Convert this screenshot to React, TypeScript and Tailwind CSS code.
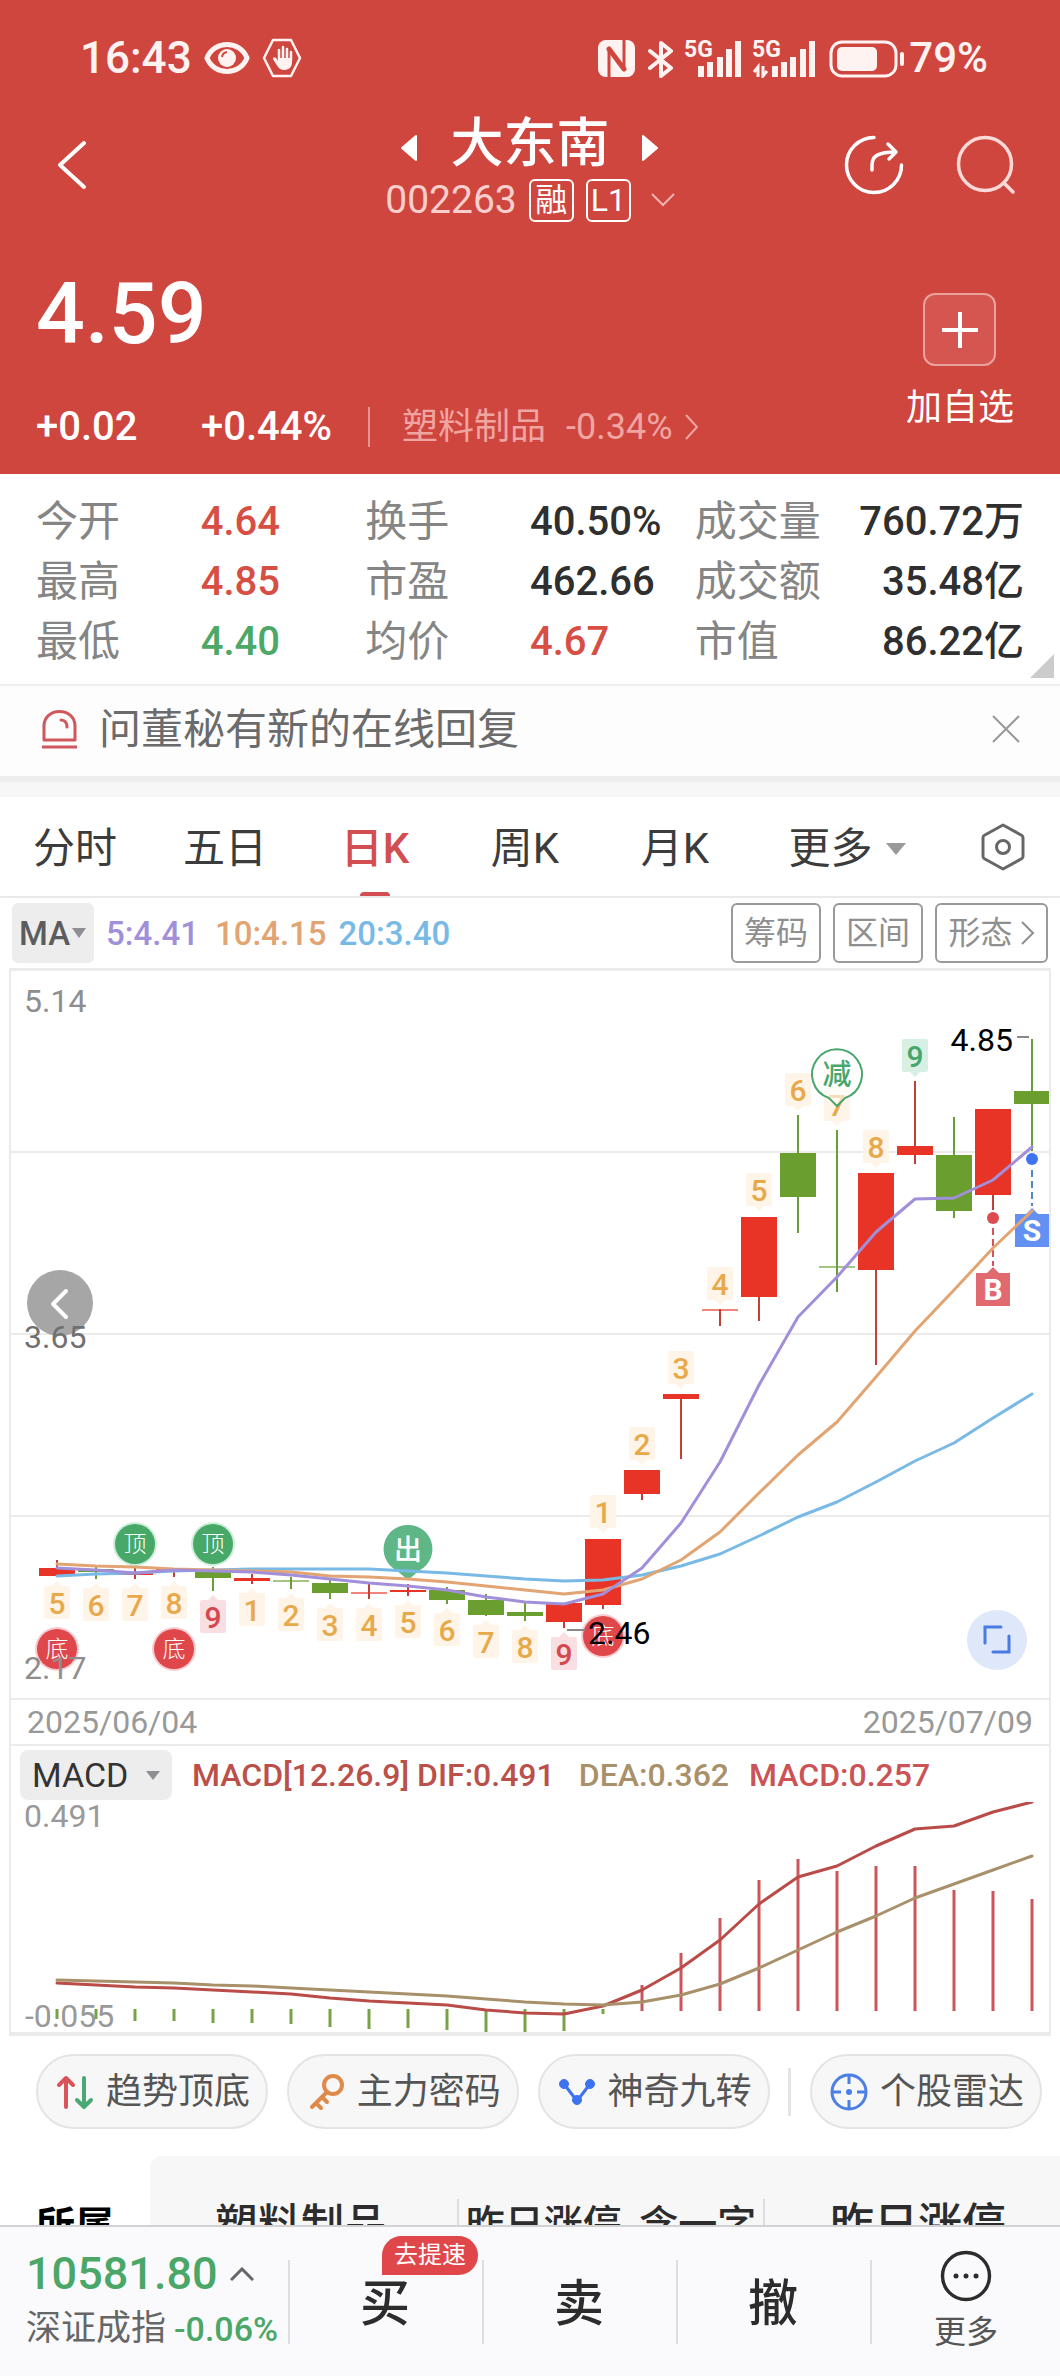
import React from 'react';

type Candle = {
  color: 'r' | 'g';
  open: number;
  close: number;
  high: number;
  low: number;
  thin?: boolean;
};

type Turn = { i: number; n: number; y: number; tone: 'gold' | 'red' | 'green' };

// Everything below is in chart pixels, y measured from the top of each pane
const STEP = 39;
const X0 = 57;
const cx = (i: number) => X0 + STEP * i;

const candles: Candle[] = [
  { color: 'r', open: 598, close: 606, high: 590, low: 606 },
  { color: 'g', open: 599, close: 602, high: 597, low: 609 },
  { color: 'r', open: 603, close: 605, high: 598, low: 609 },
  { color: 'r', open: 599, close: 601, high: 599, low: 607 },
  { color: 'g', open: 602, close: 608, high: 597, low: 621 },
  { color: 'r', open: 608, close: 611, high: 604, low: 614 },
  { color: 'g', open: 610, close: 612, high: 607, low: 619, thin: true },
  { color: 'g', open: 613, close: 623, high: 609, low: 629 },
  { color: 'r', open: 622, close: 624, high: 614, low: 629, thin: true },
  { color: 'r', open: 620, close: 622, high: 614, low: 626 },
  { color: 'g', open: 620, close: 630, high: 617, low: 634 },
  { color: 'g', open: 630, close: 645, high: 624, low: 646 },
  { color: 'g', open: 642, close: 646, high: 633, low: 651 },
  { color: 'r', open: 633, close: 652, high: 633, low: 658 },
  { color: 'r', open: 569, close: 635, high: 569, low: 639 },
  { color: 'r', open: 500, close: 524, high: 500, low: 530 },
  { color: 'r', open: 424, close: 429, high: 424, low: 489 },
  { color: 'r', open: 339, close: 341, high: 339, low: 356, thin: true },
  { color: 'r', open: 247, close: 327, high: 247, low: 351 },
  { color: 'g', open: 183, close: 227, high: 145, low: 263 },
  { color: 'g', open: 296, close: 298, high: 160, low: 322, thin: true },
  { color: 'r', open: 203, close: 300, high: 203, low: 395 },
  { color: 'r', open: 176, close: 185, high: 111, low: 194 },
  { color: 'g', open: 185, close: 241, high: 147, low: 248 },
  { color: 'r', open: 139, close: 225, high: 139, low: 240 },
  { color: 'g', open: 121, close: 134, high: 69, low: 181 },
];

const ma5 = [598, 600, 603, 600, 601, 602, 605, 609, 613, 616, 620, 627, 632, 634, 624, 598, 553, 492, 415, 347, 307, 262, 229, 228, 210, 177];
const ma10 = [594, 596, 597, 599, 600, 601, 602, 606, 607, 609, 612, 616, 620, 624, 620, 609, 590, 562, 523, 485, 452, 407, 361, 320, 278, 241];
const ma20 = [606, 604, 603, 601, 600, 599, 599, 599, 599, 601, 603, 606, 609, 611, 610, 605, 596, 584, 566, 547, 532, 512, 491, 473, 448, 424];

const dif = [183, 185, 187, 188, 190, 192, 194, 198, 201, 203, 205, 210, 213, 214, 206, 190, 168, 140, 104, 77, 66, 46, 29, 26, 12, 2];
const dea = [180, 181, 182, 183, 185, 186, 188, 190, 192, 194, 196, 199, 202, 204, 205, 202, 195, 184, 168, 150, 132, 116, 98, 84, 70, 56];
const bars = [219, 219, 221, 221, 223, 223, 224, 227, 229, 228, 230, 233, 234, 231, 214, 185, 153, 118, 80, 59, 71, 66, 66, 90, 91, 99];

const lowerTurns: Turn[] = [
  { i: 0, n: 5, y: 616, tone: 'gold' },
  { i: 1, n: 6, y: 618, tone: 'gold' },
  { i: 2, n: 7, y: 618, tone: 'gold' },
  { i: 3, n: 8, y: 616, tone: 'gold' },
  { i: 4, n: 9, y: 630, tone: 'red' },
  { i: 5, n: 1, y: 623, tone: 'gold' },
  { i: 6, n: 2, y: 628, tone: 'gold' },
  { i: 7, n: 3, y: 638, tone: 'gold' },
  { i: 8, n: 4, y: 638, tone: 'gold' },
  { i: 9, n: 5, y: 635, tone: 'gold' },
  { i: 10, n: 6, y: 643, tone: 'gold' },
  { i: 11, n: 7, y: 655, tone: 'gold' },
  { i: 12, n: 8, y: 660, tone: 'gold' },
  { i: 13, n: 9, y: 667, tone: 'red' },
];

const upperTurns: Turn[] = [
  { i: 14, n: 1, y: 525, tone: 'gold' },
  { i: 15, n: 2, y: 457, tone: 'gold' },
  { i: 16, n: 3, y: 381, tone: 'gold' },
  { i: 17, n: 4, y: 297, tone: 'gold' },
  { i: 18, n: 5, y: 203, tone: 'gold' },
  { i: 19, n: 6, y: 103, tone: 'gold' },
  { i: 20, n: 7, y: 118, tone: 'gold' },
  { i: 21, n: 8, y: 160, tone: 'gold' },
  { i: 22, n: 9, y: 69, tone: 'green' },
];

const tones = {
  gold: { bg: '#fef4e8', fg: '#e8a94b' },
  red: { bg: '#f9dfe1', fg: '#d4484e' },
  green: { bg: '#d8f0e3', fg: '#48a66c' },
};

const toPoints = (ys: number[]) => ys.map((y, i) => `${cx(i)},${y}`).join(' ');

const TurnTag: React.FC<{ turn: Turn; up?: boolean }> = ({ turn, up }) => {
  const x = cx(turn.i);
  const { bg, fg } = tones[turn.tone];
  const pointer = up
    ? `${x - 6},${turn.y + 1} ${x},${turn.y - 5} ${x + 6},${turn.y + 1}`
    : `${x - 6},${turn.y + 32} ${x},${turn.y + 38} ${x + 6},${turn.y + 32}`;
  return (
    <g>
      <rect x={x - 13} y={turn.y} width={26} height={33} rx={2} fill={bg} />
      <polygon points={pointer} fill={bg} />
      <text x={x} y={turn.y + 28} fontSize={30} fontWeight={500} fill={fg} textAnchor="middle">{turn.n}</text>
    </g>
  );
};

const RoundMark: React.FC<{ x: number; y: number; label: string; fill: string; ring: string }> = ({ x, y, label, fill, ring }) => (
  <g>
    <circle cx={x} cy={y} r={22} fill={ring} />
    <circle cx={x} cy={y} r={20} fill={fill} />
    <text x={x} y={y + 8} fontSize={23} fontWeight={300} fill="#fff" textAnchor="middle">{label}</text>
  </g>
);

const KLineChart: React.FC = () => (
  <svg viewBox="0 0 1060 728" className="block w-full" role="img" aria-label="日K">
    {[182, 364, 546].map((y) => (
      <line key={y} x1={11} x2={1049} y1={y} y2={y} stroke="#ebebeb" strokeWidth={2} />
    ))}

    {/* 上一段 */}
    <circle cx={60} cy={333} r={33} fill="#a6a6a6" />
    <path d="M66 321 L53 334 L66 347" fill="none" stroke="#fff" strokeWidth={4} strokeLinecap="round" strokeLinejoin="round" />

    {lowerTurns.map((t) => <TurnTag key={t.i} turn={t} up />)}
    {upperTurns.map((t) => <TurnTag key={t.i} turn={t} />)}

    <path d="M408 555 a24 24 0 0 1 12 45 L408 610 L396 600 a24 24 0 0 1 12 -45 Z" fill="#5fb687" />
    <text x={408} y={590} fontSize={28} fontWeight={500} fill="#fff" textAnchor="middle">出</text>

    <RoundMark x={135} y={574} label="顶" fill="#48a867" ring="#cdeedb" />
    <RoundMark x={213} y={574} label="顶" fill="#48a867" ring="#cdeedb" />
    <RoundMark x={57} y={679} label="底" fill="#e0474b" ring="#f7ccd1" />
    <RoundMark x={174} y={679} label="底" fill="#e0474b" ring="#f7ccd1" />
    <RoundMark x={603} y={666} label="底" fill="#e0474b" ring="#f7ccd1" />

    {candles.map((c, i) => {
      const body = c.color === 'r' ? '#e83427' : '#6a9e2f';
      const wick = c.color === 'r' ? '#c0403a' : '#6a9e3a';
      return (
        <g key={i}>
          <line x1={cx(i)} x2={cx(i)} y1={c.high} y2={c.low} stroke={wick} strokeWidth={2} />
          <rect x={cx(i) - 18} y={c.open} width={36} height={c.close - c.open} fill={body} opacity={c.thin ? 0.6 : 1} />
        </g>
      );
    })}

    {/* B / S 标记 */}
    <circle cx={993} cy={248} r={6} fill="#dd4b50" />
    <line x1={993} x2={993} y1={258} y2={296} stroke="#d4535a" strokeWidth={2} strokeDasharray="7 4" />
    <path d="M976 303 h11 l6 -6 l6 6 h11 v33 h-34 Z" fill="#e16a70" />
    <text x={993} y={330} fontSize={30} fontWeight={700} fill="#fff" textAnchor="middle">B</text>
    <circle cx={1032} cy={189} r={6} fill="#3f74f0" />
    <line x1={1032} x2={1032} y1={200} y2={236} stroke="#4f86c9" strokeWidth={2} strokeDasharray="7 4" />
    <path d="M1015 244 h11 l6 -6 l6 6 h11 v33 h-34 Z" fill="#6290f3" />
    <text x={1032} y={271} fontSize={30} fontWeight={700} fill="#fff" textAnchor="middle">S</text>

    <g fill="none" strokeWidth={3} strokeLinejoin="round" strokeLinecap="round">
      <polyline points={toPoints(ma20)} stroke="#78b9e6" />
      <polyline points={toPoints(ma10)} stroke="#e2a472" />
      <polyline points={toPoints(ma5)} stroke="#a18fda" />
    </g>

    <path d="M829 128 A25 25 0 1 1 845 128 L837 136 Z" fill="#fff" fillOpacity={0.6} stroke="#48a66c" strokeWidth={2} />
    <text x={837} y={115} fontSize={29} fontWeight={500} fill="#48a66c" textAnchor="middle">减</text>

    <text x={1013} y={81} fontSize={32} fill="#000" textAnchor="end">4.85</text>
    <line x1={1017} x2={1029} y1={67} y2={67} stroke="#888" strokeWidth={2} />
    <line x1={567} x2={585} y1={660} y2={660} stroke="#888" strokeWidth={2} />
    <text x={588} y={674} fontSize={32} fill="#000">2.46</text>

    <g fontSize={32} fill="#8e8e8e">
      <text x={24} y={42}>5.14</text>
      <text x={24} y={378} fill="#707070">3.65</text>
      <text x={24} y={709}>2.17</text>
    </g>

    {/* 全屏 */}
    <circle cx={997} cy={670} r={30} fill="#dfe7fb" />
    <path d="M985 673 V657 H1001 M1009 666 V682 H993" fill="none" stroke="#4a7be0" strokeWidth={3} strokeLinecap="round" />
  </svg>
);

const MacdChart: React.FC = () => (
  <svg viewBox="0 2 1060 234" className="block w-full" role="img" aria-label="MACD">
    <g fontSize={32} fill="#999">
      <text x={24} y={27}>0.491</text>
      <text x={25} y={227}>-0.055</text>
    </g>
    {bars.map((y, i) => (
      <line
        key={i}
        x1={cx(i)}
        x2={cx(i)}
        y1={i < 15 ? 209 : 211}
        y2={y}
        stroke={i < 15 ? '#76a346' : '#cb5558'}
        strokeWidth={3}
      />
    ))}
    <g fill="none" strokeWidth={3} strokeLinejoin="round" strokeLinecap="round">
      <polyline points={toPoints(dif)} stroke="#b94c48" />
      <polyline points={toPoints(dea)} stroke="#a8916a" />
    </g>
  </svg>
);

const StatusBar: React.FC = () => (
  <div className="flex h-[100px] items-center justify-between pt-4 pr-[72px] pl-[80px] text-[42px] leading-none font-medium text-[#fff3f2]">
    <div className="flex items-center gap-3">
      <span className="text-[44px]">16:43</span>
      <svg className="h-[38px] w-[46px]" viewBox="0 0 46 38">
        <path d="M3 19 C10 1 36 1 43 19 C36 37 10 37 3 19 Z" fill="none" stroke="currentColor" strokeWidth="5" />
        <circle cx="23" cy="19" r="9" fill="currentColor" />
        <path d="M18 18 a6 6 0 0 1 5 -5" fill="none" stroke="#cf463f" strokeWidth="2" />
      </svg>
      <svg className="h-[40px] w-[40px]" viewBox="0 0 40 40">
        <path d="M11 2 H29 L38 20 L29 38 H11 L2 20 Z" fill="none" stroke="currentColor" strokeWidth="2.500" strokeLinejoin="round" />
        <path d="M17 22 V12 M21 22 V9 M25 22 V11 M29 22 V14" fill="none" stroke="currentColor" strokeWidth="2.500" strokeLinecap="round" />
        <path d="M16 20 H30 V24 C30 30 26 32 22 32 C18 32 16 29 14 26 L11 21 C11 19 13 19 14 20 L16 23 Z" fill="currentColor" />
      </svg>
    </div>
    <div className="flex items-center gap-1">
      <svg className="h-[40px] w-[308px]" viewBox="598 37 308 40" fill="none" stroke="currentColor">
        {/* NFC */}
        <rect x="599" y="39" width="37" height="37" rx="8" fill="currentColor" stroke="none" />
        <path d="M610 76 V48 L625 68 V39" stroke="#cf463f" strokeWidth="3" strokeLinejoin="round" />
        <path d="M610 48 L625 68" stroke="#cf463f" strokeWidth="5" strokeLinecap="round" />
        {/* 蓝牙 */}
        <path d="M651 50 L672 67 L662 75 V42 L672 50 L651 67" strokeWidth="4" strokeLinejoin="round" strokeLinecap="round" />
        <g fill="currentColor" stroke="none" fontSize="23" fontWeight="700">
          <text x="685" y="56">5G</text>
          <text x="753" y="56">5G</text>
        </g>
        <path d="M702 65 V76 M711 61 V76 M721 56 V76 M730 48 V76 M739 40 V76" strokeWidth="6" />
        <path d="M776 65 V76 M785 61 V76 M794 56 V76 M804 48 V76 M813 40 V76" strokeWidth="6" />
        <path d="M759 76 V66 L755 71 M764 65 V75 L768 70" strokeWidth="3" />
        <rect x="832" y="41" width="65" height="34" rx="11" strokeWidth="3" />
        <rect x="838" y="46" width="40" height="24" rx="5" fill="currentColor" stroke="none" />
        <path d="M903 53 V63" strokeWidth="4" strokeLinecap="round" />
      </svg>
      <span>79%</span>
    </div>
  </div>
);

const TitleBar: React.FC = () => (
  <div className="grid h-[130px] grid-cols-[1fr_auto_1fr] items-center px-11 text-white">
    <button aria-label="返回" className="ml-3 justify-self-start">
      <svg className="h-[50px] w-[32px]" viewBox="0 0 32 50" fill="none" stroke="currentColor" strokeWidth="4">
        <path d="M28 3 L4 25 L28 47" strokeLinecap="round" strokeLinejoin="round" />
      </svg>
    </button>
    <div className="flex flex-col items-center gap-1 pt-1">
      <div className="flex items-center gap-8">
        <button aria-label="上一只">
          <svg className="mt-2 h-[28px] w-[18px]" viewBox="0 0 18 28"><path d="M16 2 V26 L2 14 Z" fill="currentColor" stroke="currentColor" strokeWidth="2" strokeLinejoin="round" /></svg>
        </button>
        <h1 className="text-[53px] leading-[62px] font-medium">大东南</h1>
        <button aria-label="下一只">
          <svg className="mt-2 h-[28px] w-[18px]" viewBox="0 0 18 28"><path d="M2 2 V26 L16 14 Z" fill="currentColor" stroke="currentColor" strokeWidth="2" strokeLinejoin="round" /></svg>
        </button>
      </div>
      <div className="flex items-center gap-3 text-[32px] leading-none">
        <span className="text-[39px] text-[#f8cfcc]">002263</span>
        <span className="flex h-[43px] w-[45px] items-center justify-center rounded-md border-2">融</span>
        <span className="flex h-[43px] w-[45px] items-center justify-center rounded-md border-2">L1</span>
        <svg className="ml-2 h-[14px] w-[24px]" viewBox="0 0 24 14"><path d="M1 1 L12 12 L23 1" fill="none" stroke="#f3b4b0" strokeWidth="2" /></svg>
      </div>
    </div>
    <div className="flex gap-[52px] justify-self-end">
      <button aria-label="分享">
        <svg className="h-[60px] w-[60px]" viewBox="0 0 60 60" fill="none" stroke="currentColor" strokeWidth="3.500" strokeLinecap="round">
          <path d="M30 2.500 A27.500 27.500 0 1 0 57.500 30" />
          <path d="M28 35 V30 C28 21 34 17 52 17 M44 9 L52 17 L45 24" strokeLinejoin="round" />
        </svg>
      </button>
      <button aria-label="搜索">
        <svg className="h-[60px] w-[60px]" viewBox="0 0 60 60" fill="none" stroke="#fbd9d7" strokeWidth="3.500" strokeLinecap="round">
          <circle cx="29" cy="29" r="26.500" />
          <path d="M49 49 L57 57" />
        </svg>
      </button>
    </div>
  </div>
);

const Quote: React.FC = () => (
  <div className="flex items-start justify-between pt-10 pr-[46px] pb-[27px] pl-9 text-white">
    <div className="flex flex-col gap-[49px]">
      <div className="text-[86px] leading-[88px] font-medium">4.59</div>
      <div className="flex h-10 items-center text-[40px] leading-10 font-medium">
        <span className="w-[165px]">+0.02</span>
        <span>+0.44%</span>
        <a href="#sector" className="ml-9 flex h-10 items-center border-l-2 border-[#e59590] pl-8 text-[36px] font-normal text-[#efa5a1]">
          塑料制品<span className="ml-5">-0.34%</span>
          <svg className="ml-3 h-[26px] w-[14px]" viewBox="0 0 14 26"><path d="M1 1 L12 13 L1 25" fill="none" stroke="currentColor" strokeWidth="2" /></svg>
        </a>
      </div>
    </div>
    <button className="mt-[23px] flex flex-col items-center gap-5 text-[36px] leading-[44px]">
      <span className="flex h-[73px] w-[73px] items-center justify-center rounded-xl border-2 border-[#eaa29e] bg-[#d55651]">
        <svg className="h-9 w-9" viewBox="0 0 36 36"><path d="M18 1 V35 M1 18 H35" stroke="#fff" strokeWidth="4" strokeLinecap="round" /></svg>
      </span>
      加自选
    </button>
  </div>
);

const stats = [
  { label: '今开', value: '4.64', color: 'text-[#d64e44]' },
  { label: '换手', value: '40.50%', color: 'text-[#2f2f2f]' },
  { label: '成交量', value: '760.72万', color: 'text-[#2f2f2f]' },
  { label: '最高', value: '4.85', color: 'text-[#d64e44]' },
  { label: '市盈', value: '462.66', color: 'text-[#2f2f2f]' },
  { label: '成交额', value: '35.48亿', color: 'text-[#2f2f2f]' },
  { label: '最低', value: '4.40', color: 'text-[#4ca866]' },
  { label: '均价', value: '4.67', color: 'text-[#d64e44]' },
  { label: '市值', value: '86.22亿', color: 'text-[#2f2f2f]' },
];

const Stats: React.FC = () => (
  <section className="relative border-b-2 border-[#eee] px-9 pt-[18px] pb-3">
    <dl className="grid grid-cols-3">
      {stats.map((s, i) => (
        <div key={s.label} className={i % 3 === 2 ? 'flex justify-between leading-[60px]' : 'flex leading-[60px]'}>
          <dt className={i % 3 === 2 ? 'text-[42px] text-[#858585]' : 'w-1/2 text-[42px] text-[#858585]'}>{s.label}</dt>
          <dd className={`text-[40px] font-medium whitespace-nowrap ${s.color}`}>{s.value}</dd>
        </div>
      ))}
    </dl>
    <svg className="absolute right-[6px] bottom-[6px] h-6 w-6" viewBox="0 0 24 24"><path d="M24 0 V24 H0 Z" fill="#ccc" /></svg>
  </section>
);

const Notice: React.FC = () => (
  <section className="flex h-[90px] items-center bg-[#fdfdfd] pr-[40px] pb-1 pl-[40px] text-[42px] text-[#6b6b6b]">
    <svg className="h-[40px] w-[39px]" viewBox="0 0 39 40" fill="none" stroke="#d0575b" strokeWidth="3">
      <path d="M4 31 V17 C4 8 11 2.500 19.500 2.500 C28 2.500 35 8 35 17 V31 Z" strokeLinejoin="round" />
      <path d="M2 38 H37" />
      <path d="M21 11 C25 11 27 14 27 18" strokeLinecap="round" />
    </svg>
    <a href="#notice" className="ml-5 flex-1">问董秘有新的在线回复</a>
    <button aria-label="关闭">
      <svg className="h-[28px] w-[28px]" viewBox="0 0 28 28"><path d="M1 1 L27 27 M27 1 L1 27" stroke="#999" strokeWidth="2" /></svg>
    </button>
  </section>
);

const periods = ['分时', '五日', '日K', '周K', '月K'];

const PeriodTabs: React.FC = () => (
  <nav className="grid h-[101px] grid-cols-[150fr_150fr_150fr_150fr_150fr_195fr_115fr] border-b-2 border-[#e9e9e9] text-[42px] text-[#3c3c3c]">
    {periods.map((p) => {
      const active = p === '日K';
      return (
        <button key={p} className={active ? 'relative pt-1 font-medium text-[#d24e50]' : 'relative pt-1'}>
          {p}
          {active && <span className="absolute inset-x-0 bottom-0 mx-auto h-1 w-[30px] rounded-t bg-[#d24e50]" />}
        </button>
      );
    })}
    <button className="flex items-center justify-center gap-3 pt-1">
      更多
      <svg className="h-[14px] w-[22px]" viewBox="0 0 22 14"><path d="M1 1 H21 L11 13 Z" fill="#999" /></svg>
    </button>
    <button aria-label="设置" className="flex items-center justify-center">
      <svg className="h-[48px] w-[44px]" viewBox="0 0 44 48" fill="none" stroke="#666" strokeWidth="3">
        <path d="M22 2 L41 12.500 Q42 13 42 15 V33 Q42 35 41 35.500 L22 46 L3 35.500 Q2 35 2 33 V15 Q2 13 3 12.500 Z" strokeLinejoin="round" />
        <circle cx="22" cy="24" r="6.500" />
      </svg>
    </button>
  </nav>
);

const MaBar: React.FC = () => (
  <div className="flex h-[70px] items-center justify-between px-3 text-[33px] leading-none">
    <div className="flex items-center font-medium">
      <div className="relative">
        <select aria-label="主图指标" className="h-[60px] w-[82px] appearance-none rounded-md bg-[#ededed] pl-[7px] text-[#5c5c5c]">
          <option>MA</option>
        </select>
        <svg className="pointer-events-none absolute top-[25px] right-2 h-[10px] w-[14px]" viewBox="0 0 14 10"><path d="M0 0 H14 L7 10 Z" fill="#8e8e93" /></svg>
      </div>
      <span className="ml-3 text-[#a18fda]">5:4.41</span>
      <span className="ml-4 text-[#e2a472]">10:4.15</span>
      <span className="ml-3 text-[#78b9e6]">20:3.40</span>
    </div>
    <div className="flex gap-3 text-[32px] text-[#8f8f8f]">
      <button className="h-[60px] w-[90px] rounded-md border-2 border-[#999]">筹码</button>
      <button className="h-[60px] w-[90px] rounded-md border-2 border-[#999]">区间</button>
      <button className="flex h-[60px] w-[113px] items-center justify-center gap-2 rounded-md border-2 border-[#999]">
        形态
        <svg className="h-[24px] w-[14px]" viewBox="0 0 14 24"><path d="M1 1 L12 12 L1 23" fill="none" stroke="currentColor" strokeWidth="2" /></svg>
      </button>
    </div>
  </div>
);

const ChartPanel: React.FC = () => (
  <section className="relative">
    <div className="pointer-events-none absolute inset-y-0 right-[9px] left-[9px] border-2 border-t-[3px] border-b-[4px] border-[#ebebeb]" />
    <div className="pt-[2px]">
      <KLineChart />
    </div>
    <div className="mx-[9px] flex h-[48px] items-center justify-between border-y-2 border-[#ebebeb] px-[18px] text-[32px] leading-none text-[#999]">
      <span>2025/06/04</span>
      <span>2025/07/09</span>
    </div>
    <div className="flex h-[56px] items-center pt-[2px] pl-5 text-[32px] leading-none font-medium">
      <div className="relative">
        <select aria-label="副图指标" className="h-[50px] w-[152px] appearance-none rounded-lg bg-[#ededed] pl-3 text-[34px] font-normal text-[#333]">
          <option>MACD</option>
        </select>
        <svg className="pointer-events-none absolute top-[21px] right-3 h-[9px] w-[14px]" viewBox="0 0 14 9"><path d="M0 0 H14 L7 9 Z" fill="#8e8e93" /></svg>
      </div>
      <span className="ml-5 text-[#bb4f4a]">MACD[12.26.9] DIF:0.491</span>
      <span className="ml-6 text-[#a8916a]">DEA:0.362</span>
      <span className="ml-5 text-[#cb5255]">MACD:0.257</span>
    </div>
    <MacdChart />
  </section>
);

const tools = [
  {
    label: '趋势顶底',
    icon: (
      <g fill="none" strokeWidth="4" strokeLinecap="round" strokeLinejoin="round">
        <path d="M10 34 V5 M3 12 L10 5 L17 12" stroke="#d9545a" />
        <path d="M28 5 V34 M21 27 L28 34 L35 27" stroke="#4aa873" />
      </g>
    ),
  },
  {
    label: '主力密码',
    icon: (
      <g fill="none" stroke="#e08a4a" strokeWidth="4" strokeLinecap="round" strokeLinejoin="round">
        <circle cx="26" cy="12" r="9" />
        <path d="M20 19 L5 34 M9 30 L14 35 M15 24 L20 29" />
      </g>
    ),
  },
  {
    label: '神奇九转',
    icon: (
      <g fill="#3f72ee" stroke="#3f72ee">
        <path d="M6 11 L19 28 L32 11" fill="none" strokeWidth="3" />
        <circle cx="6" cy="11" r="4.500" />
        <circle cx="32" cy="11" r="4.500" />
        <circle cx="19" cy="27" r="4.500" />
      </g>
    ),
  },
  {
    label: '个股雷达',
    icon: (
      <g fill="none" stroke="#4a7fe8" strokeWidth="3">
        <circle cx="19" cy="19" r="17" />
        <path d="M19 2 V11 M19 27 V36 M2 19 H11 M27 19 H36" />
        <circle cx="19" cy="19" r="3" fill="#4a7fe8" stroke="none" />
      </g>
    ),
  },
];

const Tools: React.FC = () => (
  <div className="flex items-center justify-between pt-[18px] pr-[18px] pb-[27px] pl-9 text-[36px] text-[#555]">
    {tools.map((t, i) => (
      <React.Fragment key={t.label}>
        {i === 3 && <span className="h-12 w-[3px] bg-[#e3e3e3]" />}
        <button className="flex h-[75px] w-[232px] items-center gap-3 rounded-full border-2 border-[#e4e4e4] bg-[#f7f7f7] pl-[18px] leading-none whitespace-nowrap">
          <svg className="h-[38px] w-[38px] shrink-0" viewBox="0 0 38 38">{t.icon}</svg>
          {t.label}
        </button>
      </React.Fragment>
    ))}
  </div>
);

const Boards: React.FC = () => (
  <section className="flex h-[140px] text-[#2c2c2c]">
    <h2 className="w-[150px] pt-[45px] pl-9 text-[39px] leading-[50px] font-bold text-black">所属</h2>
    <div className="grid flex-1 grid-cols-[307fr_308fr_295fr] rounded-tl-xl bg-[#f7f7f7] pt-[43px] leading-[52px] font-medium">
      <a href="#board-1" className="pl-[65px] text-[43px]">塑料制品</a>
      <a href="#board-2" className="text-center text-[39px] whitespace-nowrap">
        <span className="mt-[15px] block h-10 border-x-2 border-[#ddd]"><span className="-mt-[15px] block">昨日涨停_含一字</span></span>
      </a>
      <a href="#board-3" className="pl-[65px] text-[44px]">昨日涨停</a>
    </div>
  </section>
);

const TradeBar: React.FC = () => (
  <footer className="grid h-[151px] shrink-0 grid-cols-[288fr_194fr_194fr_194fr_190fr] items-center border-t-2 border-[#d2d2d4] bg-[#fafafc]">
    <a href="#index" className="pl-[26px] font-medium whitespace-nowrap text-[#4ba768]">
      <span className="flex items-center gap-3 text-[45px] leading-[54px]">
        10581.80
        <svg className="h-[14px] w-[24px]" viewBox="0 0 24 14"><path d="M1 13 L12 2 L23 13" fill="none" stroke="#666" strokeWidth="3" /></svg>
      </span>
      <span className="flex items-center gap-2 text-[34px] leading-[56px]">
        <span className="text-[35px] font-normal text-[#666]">深证成指</span>
        -0.06%
      </span>
    </a>
    {['买', '卖', '撤'].map((t) => (
      <button key={t} className="relative h-[84px] border-l-2 border-[#ddd] pt-1 pr-[2px] text-[50px] leading-[76px] font-medium text-[#2c2c2c]">
        {t}
        {t === '买' && (
          <span className="absolute -top-6 right-1 flex h-[39px] w-24 items-center justify-center rounded-[20px] rounded-bl-none bg-[#e0474a] text-[24px] leading-none font-normal text-white">
            去提速
          </span>
        )}
      </button>
    ))}
    <button className="flex h-[84px] flex-col items-center justify-center gap-2 border-l-2 border-[#ddd] text-[32px] leading-[44px] text-[#555]">
      <svg className="h-[52px] w-[52px] shrink-0" viewBox="0 0 52 52">
        <circle cx="26" cy="26" r="23.500" fill="none" stroke="#2c2c2c" strokeWidth="3.500" />
        <g fill="#2c2c2c">
          <circle cx="16" cy="26" r="2.500" />
          <circle cx="26" cy="26" r="2.500" />
          <circle cx="36" cy="26" r="2.500" />
        </g>
      </svg>
      更多
    </button>
  </footer>
);

const App: React.FC = () => {
  return (
    <div className="flex h-screen flex-col bg-white font-[Roboto,'Noto_Sans_CJK_SC',sans-serif]">
      <main className="min-h-0 flex-1 overflow-y-auto [scrollbar-width:none]">
        <header className="bg-[#cf463f]">
          <StatusBar />
          <TitleBar />
          <Quote />
        </header>
        <Stats />
        <Notice />
        <div className="h-[21px] border-t-[6px] border-[#eee] bg-[#f7f7f7]" />
        <PeriodTabs />
        <MaBar />
        <ChartPanel />
        <Tools />
        <Boards />
      </main>
      <TradeBar />
    </div>
  );
};

export default App;
